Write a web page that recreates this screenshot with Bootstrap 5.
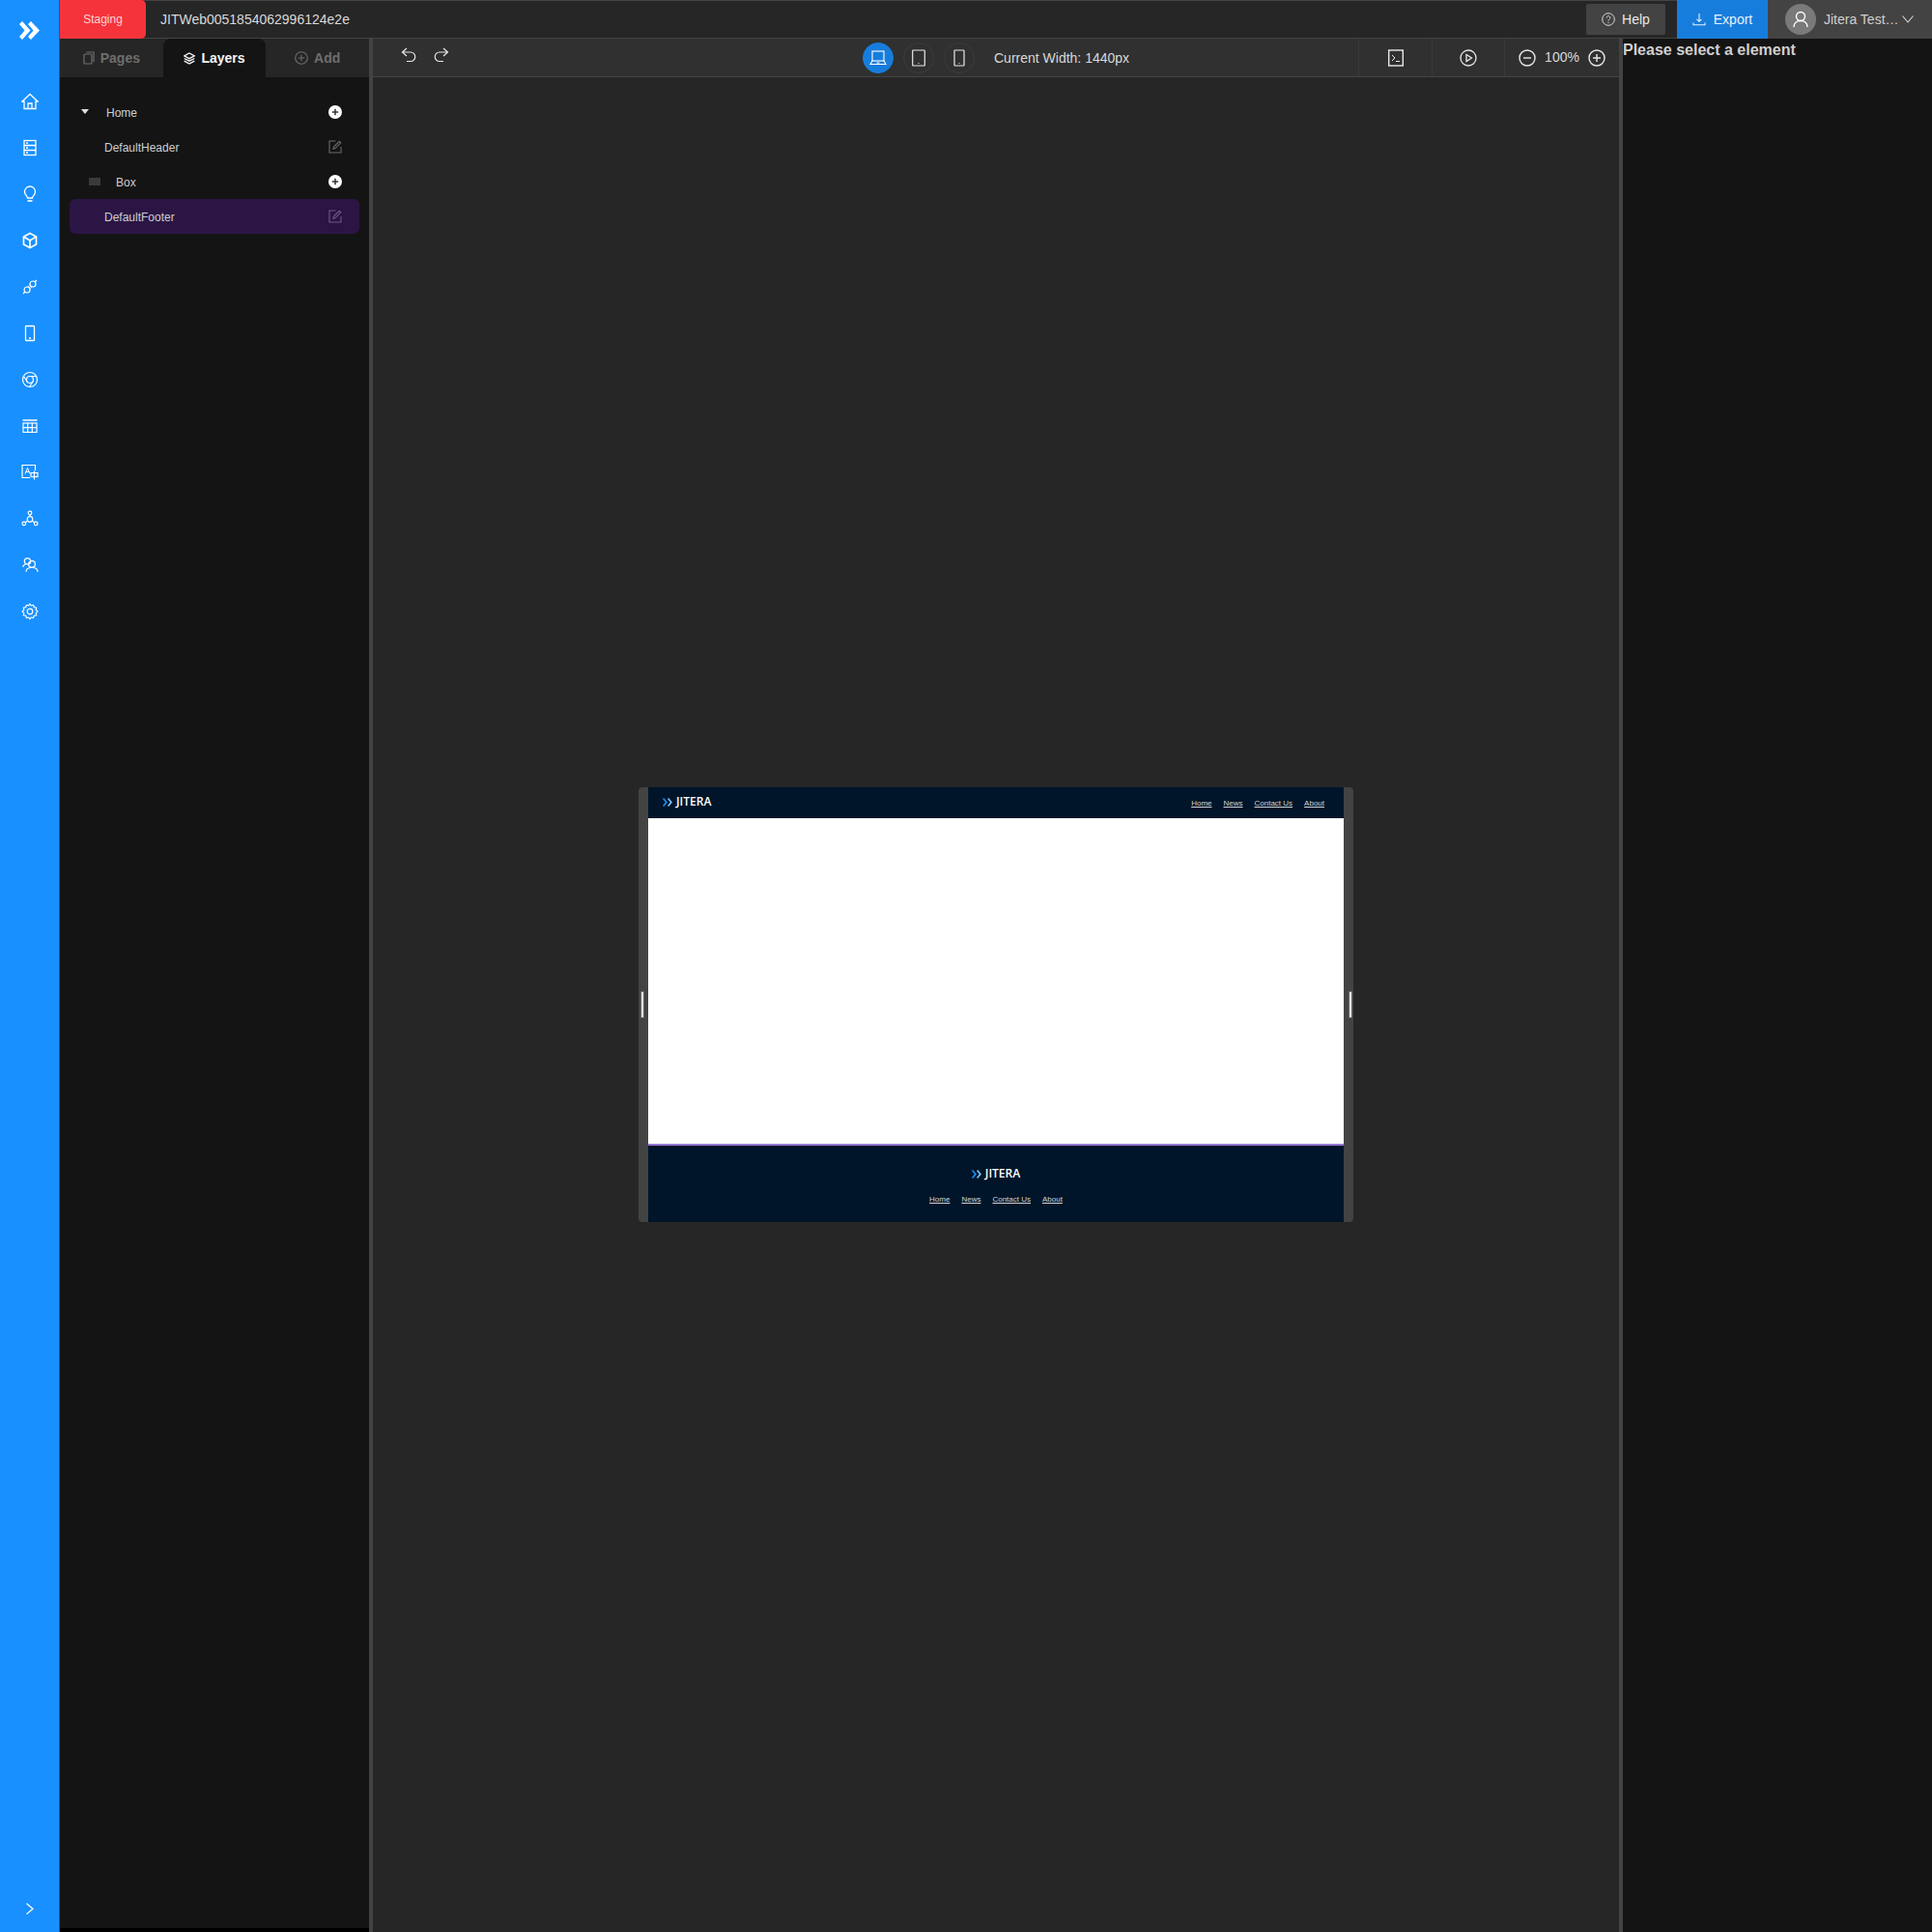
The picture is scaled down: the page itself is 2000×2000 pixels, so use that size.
<!DOCTYPE html>
<html lang="en">
<head>
<meta charset="utf-8">
<title>Jitera</title>
<link href="https://cdn.jsdelivr.net/npm/bootstrap@5.3.0/dist/css/bootstrap.min.css" rel="stylesheet">
<style>
html,body{height:2000px;margin:0;background:#262626;font-family:"Liberation Sans",Arial,sans-serif;overflow:hidden}
.shell{display:flex;height:2000px;width:2000px}
.rail{width:62px;flex:none;background:#1890ff;border-right:1px solid #1c5d99;display:flex;flex-direction:column;align-items:center;color:#fff}
.rail svg{display:block}
.rail-logo{height:62px;display:flex;align-items:center;justify-content:center}
.rail-list{margin-top:19px;display:flex;flex-direction:column}
.rail-item{height:48px;width:62px;display:flex;align-items:center;justify-content:center}
.rail-end{margin-top:auto;height:48px;display:flex;align-items:flex-start;justify-content:center;padding-top:17px}
.main{flex:1;display:flex;flex-direction:column;min-width:0}
.topbar{height:40px;flex:none;background:#262626;border-top:1px solid #434343;border-bottom:1px solid #434343;display:flex;align-items:stretch;color:#d9d9d9;font-size:14px}
.staging{width:89px;margin-top:-1px;margin-bottom:-1px;background:#f5333a;color:#fbd5d5;font-size:12px;display:flex;align-items:center;justify-content:center;border-radius:0 5px 5px 0}
.appname{margin-left:15px;display:flex;align-items:center;color:#d9d9d9;font-size:14px}
.helpbtn{margin-left:auto;margin-top:3px;margin-bottom:3px;width:82px;background:#434343;border-radius:2px;display:flex;align-items:center;justify-content:center;gap:7px;color:#e8e8e8}
.exportbtn{margin-left:12px;margin-top:-1px;margin-bottom:-1px;width:94px;background:#177ddc;display:flex;align-items:center;justify-content:center;gap:8px;color:#e8f1fb}
.userbox{margin-top:-1px;margin-bottom:-1px;width:170px;background:#434343;display:flex;align-items:center;padding-left:18px;color:#d0d0d0}
.avatar{width:32px;height:32px;border-radius:50%;background:#7a7a7a;display:flex;align-items:center;justify-content:center;flex:none}
.username{margin-left:8px;width:78px;white-space:nowrap}
.userchev{margin-left:2px}
.work{flex:1;display:flex;min-height:0}
.leftpane{width:320px;flex:none;background:#141414;display:flex;flex-direction:column;border-bottom:4px solid #000}
.tabrow{height:40px;flex:none;background:#262626;display:flex}
.tabitem{flex:1;display:flex;align-items:center;justify-content:center;gap:6px;font-size:14px;font-weight:700;color:#6e6e6e}
.tabitem.active{background:#141414;color:#f5f5f5;border-radius:8px 8px 0 0}
.tree{padding:18px 10px 0 10px;display:flex;flex-direction:column}
.treerow{height:36px;display:flex;align-items:center;font-size:12px;color:#cfcfcf;border-radius:6px}
.treerow.sel{background:#2b1545}
.lbl{padding-top:2px}
.caret{width:0;height:0;border-left:4px solid transparent;border-right:4px solid transparent;border-top:5px solid #e0e0e0;margin-left:12px;margin-right:18px;margin-top:-2px}
.boxglyph{width:12px;height:8px;background:#3a3a3a;margin-left:20px;margin-right:16px;margin-top:-1px}
.leaf{margin-left:36px}
.treeact{margin-left:auto;margin-right:18px;width:14px;height:14px;display:flex;align-items:center;justify-content:center}
.split{width:4px;flex:none;background:#434343}
.centerpane{width:1290px;flex:none;display:flex;flex-direction:column;background:#262626}
.toolbar{height:40px;flex:none;background:#303030;border-bottom:1px solid #434343;display:flex;align-items:center;color:#e0e0e0;font-size:14px}
.undo{margin-left:29px;display:flex;gap:18px;margin-top:-5px}
.devices{margin-left:auto;display:flex;gap:10px}
.devbtn{width:32px;height:32px;border-radius:50%;border:1px solid #3c3c3c;display:flex;align-items:center;justify-content:center}
.devbtn.on{background:#177ddc;border-color:#177ddc}
.curw{margin-left:20px;width:377px;color:#d9d9d9;white-space:nowrap;padding-top:1px}
.tools{display:flex;align-items:stretch;height:39px}
.toolcell{display:flex;align-items:center;justify-content:center;border-left:1px solid #3a3a3a}
.c1{width:76px}
.c2{width:75px}
.zoombox{width:119px;gap:9px;font-size:14px;color:#d9d9d9}
.canvasarea{flex:1;display:flex;align-items:center;justify-content:center}
.preview{width:740px;height:450px;display:flex}
.grip{width:10px;background:#434343;display:flex;align-items:center}
.grip.l{border-radius:4px 0 0 4px;padding-left:3px}
.grip.r{border-radius:0 4px 4px 0;padding-left:6px}
.grip i{display:block;width:2px;height:26px;background:#e0e0e0;box-shadow:0 0 0 1px #6a6a6a}
.site{flex:1;display:flex;flex-direction:column;background:#fff}
.sitehead{height:32px;background:#001529;display:flex;align-items:center;padding:0 20px 0 15px}
.sitebody{flex:1;background:#fff;border-bottom:2px solid #9678d3}
.sitefoot{height:79px;background:#001529;display:flex;flex-direction:column;align-items:center}
.brand{display:flex;align-items:center;gap:3px;color:#fff;font-family:"Open Sans",sans-serif;font-weight:600;font-size:12px;line-height:14px}
.sitehead .brand{margin-top:-2px}
.sitelinks{display:flex;gap:12px;margin-left:auto;font-size:8px}
.sitehead .sitelinks{margin-top:1px}
.sitelinks a{color:#d0d5da;text-decoration:underline}
.sitefoot .brand{margin-top:22px}
.sitefoot .sitelinks{margin:14px 0 0}
.rightpane{width:320px;flex:none;background:#141414;color:#d0d0d0;font-size:16px;font-weight:700;line-height:24px}
</style>
</head>
<body>
<div class="shell">
  <aside class="rail">
    <div class="rail-logo">
      <svg width="21" height="19" viewBox="0 0 21 19" fill="#fff"><path d="M0 3 3 0 11.500 9.500 3 19 0 16 5.500 9.500Z"/><path d="M9 3 12 0 21 9.500 12 19 9 16 14.500 9.500Z"/></svg>
    </div>
    <div class="rail-list">
      <div class="rail-item"><svg width="18" height="18" viewBox="0 0 18 18" fill="none" stroke="#fff" stroke-width="1.300"><path d="M1 9 9 1.500 17 9H15V16.500H3V9Z"/><path d="M7 16.500V11H11V16.500"/></svg></div>
      <div class="rail-item"><svg width="16" height="18" viewBox="0 0 16 18" fill="none" stroke="#fff" stroke-width="1.300"><rect x="2" y="1.500" width="12" height="15"/><path d="M2 6.500H14M2 11.500H14"/><path d="M4 4H6M4 9H6M4 14H6"/></svg></div>
      <div class="rail-item"><svg width="16" height="18" viewBox="0 0 16 18" fill="none" stroke="#fff" stroke-width="1.300"><path d="M5.500 13C5.500 11 2.500 10 2.500 6.500A5.500 5.500 0 0 1 13.500 6.500C13.500 10 10.500 11 10.500 13Z"/><path d="M5.500 16H10.500" stroke-width="1.600"/></svg></div>
      <div class="rail-item"><svg width="16" height="18" viewBox="0 0 16 18" fill="none" stroke="#fff" stroke-width="1.700"><path d="M8 1.500 14.500 5V13L8 16.500 1.500 13V5Z"/><path d="M1.500 5 8 9 14.500 5M8 9V16.500"/></svg></div>
      <div class="rail-item"><svg width="16" height="16" viewBox="0 0 16 16" fill="none" stroke="#fff" stroke-width="1.200"><circle cx="5" cy="11" r="3"/><circle cx="11" cy="5" r="3"/><path d="M1 15 3 13M13 3 15 1M6 7.500 8.500 10M7.500 6 10 8.500"/></svg></div>
      <div class="rail-item"><svg width="12" height="18" viewBox="0 0 12 18" fill="none" stroke="#fff" stroke-width="1.300"><rect x="1.500" y="1.500" width="9" height="15" rx=".5"/><path d="M5 14H7"/></svg></div>
      <div class="rail-item"><svg width="18" height="18" viewBox="0 0 18 18" fill="none" stroke="#fff" stroke-width="1.200"><circle cx="9" cy="9" r="7.500"/><circle cx="9" cy="9" r="3.500"/><path d="M9 5.500H16M6 11 2.500 5.500M12 11 8.500 16.500"/></svg></div>
      <div class="rail-item"><svg width="16" height="14" viewBox="0 0 16 14" fill="none" stroke="#fff" stroke-width="1.200"><path d="M.500 1H15.500" stroke-width="1.500"/><rect x="1" y="4" width="14" height="9.500"/><path d="M1 8.700H15M5.700 4V13.500M10.300 4V13.500"/></svg></div>
      <div class="rail-item"><svg width="18" height="18" viewBox="0 0 18 18" fill="none" stroke="#fff" stroke-width="1.200"><path d="M9 14.500H1V1.500H14.500V7"/><path d="M4 10.500 6.500 4.500 9 10.500M5 8.500H8" stroke-width="1"/><rect x="10" y="9.500" width="7" height="4"/><path d="M13.500 7.500V16.500"/></svg></div>
      <div class="rail-item"><svg width="18" height="18" viewBox="0 0 18 18" fill="none" stroke="#fff" stroke-width="1.200"><circle cx="9" cy="9.500" r="2.800"/><circle cx="9" cy="3" r="1.800"/><circle cx="2.800" cy="14" r="1.800"/><circle cx="15.200" cy="14" r="1.800"/><path d="M9 4.800V6.700M4.300 13 6.600 11M13.700 13 11.400 11"/></svg></div>
      <div class="rail-item"><svg width="18" height="18" viewBox="0 0 18 18" fill="none" stroke="#fff" stroke-width="1.200"><circle cx="6.500" cy="5" r="3.200"/><circle cx="11" cy="8" r="3.400"/><path d="M1.500 11C2 9.500 3 8.500 4.500 8M5 16C5 13 7.500 11.500 11 11.500S17 13 17 16"/></svg></div>
      <div class="rail-item"><svg width="18" height="18" viewBox="0 0 18 18" fill="none" stroke="#fff" stroke-width="1.200"><path d="M9 1 10.300 3 12.500 2.300 13.300 4.700 15.700 5 15.200 7.400 17 9 15.200 10.600 15.700 13 13.300 13.300 12.500 15.700 10.300 15 9 17 7.700 15 5.500 15.700 4.700 13.300 2.300 13 2.800 10.600 1 9 2.800 7.400 2.300 5 4.700 4.700 5.500 2.300 7.700 3Z" stroke-linejoin="round"/><circle cx="9" cy="9" r="2.800"/></svg></div>
    </div>
    <div class="rail-end"><svg width="10" height="14" viewBox="0 0 10 14" fill="none" stroke="#fff" stroke-width="1.300"><path d="M1.500 1.500 8 7 1.500 12.500"/></svg></div>
  </aside>
  <div class="main">
    <header class="topbar">
      <div class="staging">Staging</div>
      <div class="appname">JITWeb0051854062996124e2e</div>
      <div class="helpbtn"><svg width="14" height="14" viewBox="0 0 14 14" fill="none" stroke="#d9d9d9"><circle cx="7" cy="7" r="6.300"/><path d="M5.200 5.500C5.200 3 8.900 3 8.900 5.400 8.900 6.800 7 6.900 7 8.500"/><path d="M7 9.800V11"/></svg>Help</div>
      <div class="exportbtn"><svg width="14" height="14" viewBox="0 0 14 14" fill="none" stroke="#e8f1fb" stroke-width="1.100"><path d="M7 1V9M4.500 6.800 7 9.300 9.500 6.800M1 10.500V12.800H13V10.500"/></svg>Export</div>
      <div class="userbox">
        <div class="avatar"><svg width="16" height="18" viewBox="0 0 16 18" fill="none" stroke="#fff" stroke-width="1.400"><circle cx="8" cy="6" r="4.500"/><path d="M1 17C1 13 4 10.500 8 10.500S15 13 15 17"/></svg></div>
        <div class="username">Jitera Test…</div>
        <svg class="userchev" width="14" height="10" viewBox="0 0 14 10" fill="none" stroke="#d9d9d9" stroke-width="1.100"><path d="M1.500 1.500 7 8 12.500 1.500"/></svg>
      </div>
    </header>
    <div class="work">
      <section class="leftpane">
        <div class="tabrow">
          <div class="tabitem"><svg width="12" height="14" viewBox="0 0 12 14" fill="none" stroke="#6e6e6e" stroke-width="1.200"><rect x="1" y="3" width="8" height="10" rx="1"/><path d="M3.500 1H11V11"/></svg>Pages</div>
          <div class="tabitem active"><svg width="12" height="13" viewBox="0 0 12 13" fill="none" stroke="#f5f5f5" stroke-width="1.400"><path d="M6 1 11.300 3.800 6 6.600 .700 3.800Z"/><path d="M.700 6.500 6 9.200 11.300 6.500M.700 9.200 6 12 11.300 9.200"/></svg>Layers</div>
          <div class="tabitem"><svg width="14" height="14" viewBox="0 0 14 14" fill="none" stroke="#6e6e6e" stroke-width="1.100"><circle cx="7" cy="7" r="6.300"/><path d="M7 3.800V10.200M3.800 7H10.200"/></svg>Add</div>
        </div>
        <div class="tree">
          <div class="treerow"><span class="caret"></span><span class="lbl">Home</span><span class="treeact"><svg width="14" height="14" viewBox="0 0 14 14"><circle cx="7" cy="7" r="7" fill="#fff"/><path d="M7 3.800V10.200M3.800 7H10.200" stroke="#333" stroke-width="1.500"/></svg></span></div>
          <div class="treerow"><span class="leaf lbl">DefaultHeader</span><span class="treeact"><svg width="14" height="14" viewBox="0 0 14 14" fill="none" stroke="#6a6a6a" stroke-width="1.100"><path d="M7.500 1H1V13H13V7"/><path d="M5 9.200 5.500 7 11.200 1.300 12.800 2.800 7.100 8.600Z"/></svg></span></div>
          <div class="treerow"><span class="boxglyph"></span><span class="lbl">Box</span><span class="treeact"><svg width="14" height="14" viewBox="0 0 14 14"><circle cx="7" cy="7" r="7" fill="#fff"/><path d="M7 3.800V10.200M3.800 7H10.200" stroke="#333" stroke-width="1.500"/></svg></span></div>
          <div class="treerow sel"><span class="leaf lbl">DefaultFooter</span><span class="treeact"><svg width="14" height="14" viewBox="0 0 14 14" fill="none" stroke="#6f5a86" stroke-width="1.100"><path d="M7.500 1H1V13H13V7"/><path d="M5 9.200 5.500 7 11.200 1.300 12.800 2.800 7.100 8.600Z"/></svg></span></div>
        </div>
      </section>
      <div class="split"></div>
      <section class="centerpane">
        <div class="toolbar">
          <div class="undo">
            <svg width="16" height="16" viewBox="0 0 16 16" fill="none" stroke="#e8e8e8" stroke-width="1.200"><path d="M6 1 1.500 5 6 9M1.500 5H10A4.500 4.500 0 0 1 10 14.500H6"/></svg>
            <svg width="16" height="16" viewBox="0 0 16 16" fill="none" stroke="#e8e8e8" stroke-width="1.200"><path d="M10 1 14.500 5 10 9M14.500 5H6A4.500 4.500 0 0 0 6 14.500H10"/></svg>
          </div>
          <div class="devices">
            <div class="devbtn on"><svg width="18" height="16" viewBox="0 0 18 16" fill="none" stroke="#fff" stroke-width="1.100"><rect x="3" y="1" width="12" height="10"/><path d="M3 11 1 14.500H17L15 11"/><path d="M7.500 13H10.500"/></svg></div>
            <div class="devbtn"><svg width="14" height="18" viewBox="0 0 14 18" fill="none" stroke="#e8e8e8" stroke-width="1.200"><rect x=".700" y="1" width="12.600" height="16" rx=".5"/><path d="M6.500 14.500H7.500"/></svg></div>
            <div class="devbtn"><svg width="12" height="18" viewBox="0 0 12 18" fill="none" stroke="#e8e8e8" stroke-width="1.200"><rect x="1" y="1" width="10" height="16" rx=".5"/><path d="M5.500 14.500H6.500"/></svg></div>
          </div>
          <div class="curw">Current Width: 1440px</div>
          <div class="tools">
            <div class="toolcell c1"><svg width="16" height="18" viewBox="0 0 16 18" fill="none" stroke="#e8e8e8" stroke-width="1.400"><rect x=".700" y="1" width="14.600" height="16"/><path d="M4 6 7 9 4 12M8 12.500H12" stroke-width="1"/></svg></div>
            <div class="toolcell c2"><svg width="18" height="18" viewBox="0 0 18 18" fill="none" stroke="#e8e8e8" stroke-width="1.300"><circle cx="9" cy="9" r="8"/><path d="M7 5.500 12.500 9 7 12.500Z"/></svg></div>
            <div class="toolcell zoombox"><svg width="18" height="18" viewBox="0 0 18 18" fill="none" stroke="#e8e8e8" stroke-width="1.400"><circle cx="9" cy="9" r="8"/><path d="M5 9H13"/></svg><span>100%</span><svg width="18" height="18" viewBox="0 0 18 18" fill="none" stroke="#e8e8e8" stroke-width="1.400"><circle cx="9" cy="9" r="8"/><path d="M5 9H13M9 5V13"/></svg></div>
          </div>
        </div>
        <div class="canvasarea">
          <div class="preview">
            <div class="grip l"><i></i></div>
            <div class="site">
              <div class="sitehead">
                <div class="brand"><svg width="11" height="9" viewBox="0 0 11 9"><path d="M0 1 1.200 0 5 4.500 1.200 9 0 8 2.800 4.500Z" fill="#1890ff"/><path d="M5 1 6.200 0 10 4.500 6.200 9 5 8 7.800 4.500Z" fill="#7cc4ff"/></svg>JITERA</div>
                <div class="sitelinks"><a href="#">Home</a><a href="#">News</a><a href="#">Contact Us</a><a href="#">About</a></div>
              </div>
              <div class="sitebody"></div>
              <div class="sitefoot">
                <div class="brand"><svg width="11" height="9" viewBox="0 0 11 9"><path d="M0 1 1.200 0 5 4.500 1.200 9 0 8 2.800 4.500Z" fill="#1890ff"/><path d="M5 1 6.200 0 10 4.500 6.200 9 5 8 7.800 4.500Z" fill="#7cc4ff"/></svg>JITERA</div>
                <div class="sitelinks"><a href="#">Home</a><a href="#">News</a><a href="#">Contact Us</a><a href="#">About</a></div>
              </div>
            </div>
            <div class="grip r"><i></i></div>
          </div>
        </div>
      </section>
      <div class="split"></div>
      <section class="rightpane">Please select a element</section>
    </div>
  </div>
</div>
<script src="https://cdn.jsdelivr.net/npm/bootstrap@5.3.0/dist/js/bootstrap.bundle.min.js"></script>
</body>
</html>
